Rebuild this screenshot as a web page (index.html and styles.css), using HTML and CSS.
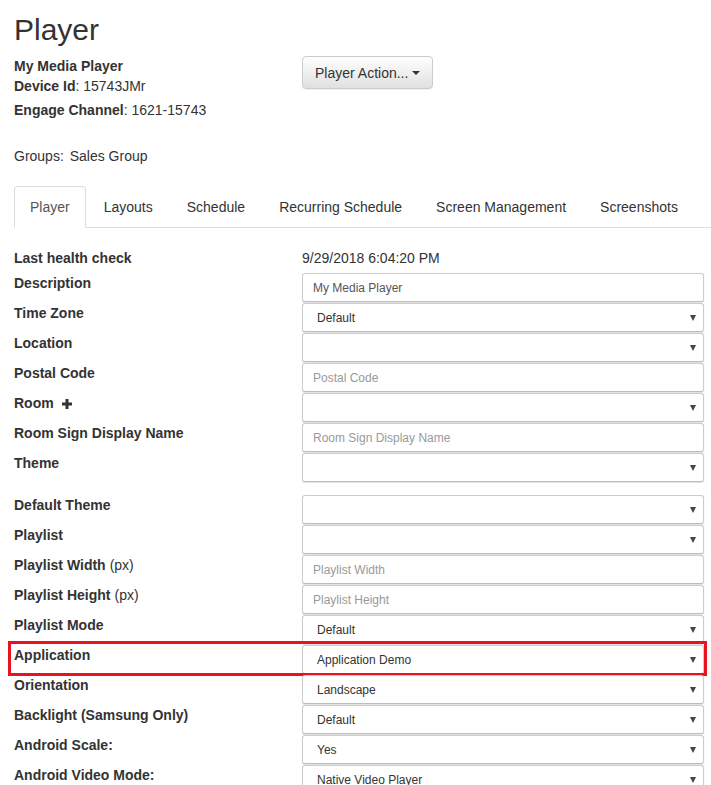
FILE: index.html
```html
<!DOCTYPE html>
<html>
<head>
<meta charset="utf-8">
<title>Player</title>
<link rel="stylesheet" href="styles.css">
</head>
<body>
<div class="page">
  <h1 class="title">Player</h1>
  <div class="header">
    <div class="info">
      <div class="line"><b>My Media Player</b></div>
      <div class="line"><b>Device Id</b>: 15743JMr</div>
      <div class="line gap4"><b>Engage Channel</b>: 1621-15743</div>
      <div class="line groups">Groups: <span class="gname">Sales Group</span></div>
    </div>
    <div class="actions">
      <button class="btn">Player Action... <span class="caret"></span></button>
    </div>
  </div>

  <ul class="tabs">
    <li class="tab active">Player</li>
    <li class="tab">Layouts</li>
    <li class="tab">Schedule</li>
    <li class="tab">Recurring Schedule</li>
    <li class="tab">Screen Management</li>
    <li class="tab">Screenshots</li>
  </ul>

  <div class="content">
    <div class="row health">
      <div class="label">Last health check</div>
      <div class="field text">9/29/2018 6:04:20 PM</div>
    </div>
    <div class="row">
      <div class="label">Description</div>
      <div class="field"><input class="input" type="text" value="My Media Player"></div>
    </div>
    <div class="row">
      <div class="label">Time Zone</div>
      <div class="field"><div class="select"><span>Default</span><i class="arrow"></i></div></div>
    </div>
    <div class="row">
      <div class="label">Location</div>
      <div class="field"><div class="select"><span></span><i class="arrow"></i></div></div>
    </div>
    <div class="row">
      <div class="label">Postal Code</div>
      <div class="field"><input class="input" type="text" placeholder="Postal Code"></div>
    </div>
    <div class="row">
      <div class="label">Room <svg class="plus" width="10" height="10" viewBox="0 0 10 10"><rect x="3.5" y="0" width="3" height="10" fill="#333"/><rect x="0" y="3.5" width="10" height="3" fill="#333"/></svg></div>
      <div class="field"><div class="select"><span></span><i class="arrow"></i></div></div>
    </div>
    <div class="row">
      <div class="label">Room Sign Display Name</div>
      <div class="field"><input class="input" type="text" placeholder="Room Sign Display Name"></div>
    </div>
    <div class="row theme">
      <div class="label">Theme</div>
      <div class="field"><div class="select"><span></span><i class="arrow"></i></div></div>
    </div>
    <div class="row">
      <div class="label">Default Theme</div>
      <div class="field"><div class="select"><span></span><i class="arrow"></i></div></div>
    </div>
    <div class="row">
      <div class="label">Playlist</div>
      <div class="field"><div class="select"><span></span><i class="arrow"></i></div></div>
    </div>
    <div class="row">
      <div class="label">Playlist Width <span class="unit">(px)</span></div>
      <div class="field"><input class="input" type="text" placeholder="Playlist Width"></div>
    </div>
    <div class="row">
      <div class="label">Playlist Height <span class="unit">(px)</span></div>
      <div class="field"><input class="input" type="text" placeholder="Playlist Height"></div>
    </div>
    <div class="row">
      <div class="label">Playlist Mode</div>
      <div class="field"><div class="select"><span>Default</span><i class="arrow"></i></div></div>
    </div>
    <div class="row marked">
      <div class="label">Application</div>
      <div class="field"><div class="select"><span>Application Demo</span><i class="arrow"></i></div></div>
      <div class="highlight"></div>
    </div>
    <div class="row">
      <div class="label">Orientation</div>
      <div class="field"><div class="select"><span>Landscape</span><i class="arrow"></i></div></div>
    </div>
    <div class="row">
      <div class="label">Backlight (Samsung Only)</div>
      <div class="field"><div class="select"><span>Default</span><i class="arrow"></i></div></div>
    </div>
    <div class="row">
      <div class="label">Android Scale:</div>
      <div class="field"><div class="select"><span>Yes</span><i class="arrow"></i></div></div>
    </div>
    <div class="row">
      <div class="label">Android Video Mode:</div>
      <div class="field"><div class="select"><span>Native Video Player</span><i class="arrow"></i></div></div>
    </div>
  </div>
</div>
</body>
</html>
```

FILE: styles.css
```css
* { box-sizing: border-box; }
html, body { margin: 0; padding: 0; background: #fff; }
body {
  font-family: "Liberation Sans", Arial, sans-serif;
  font-size: 14px;
  line-height: 20px;
  color: #333;
  overflow: hidden;
}
.page { padding: 11px 0 0 14px; }
.title {
  margin: 0;
  font-size: 30px;
  line-height: 38px;
  font-weight: normal;
  color: #333;
}
.header { display: flex; margin-top: 7px; }
.info { width: 288px; }
.line { height: 20px; }
.gap4 { margin-top: 4px; }
.groups { margin-top: 26px; }
.gname { margin-left: 2px; }
.btn {
  height: 33px;
  padding: 0 12px;
  font-family: inherit;
  font-size: 14px;
  color: #333;
  background: linear-gradient(#ffffff, #e0e0e0);
  border: 1px solid #ccc;
  border-radius: 4px;
  box-shadow: 0 1px 1px rgba(0,0,0,0.06);
  display: flex;
  align-items: center;
  gap: 4px;
}
.caret {
  display: inline-block;
  width: 0; height: 0;
  border-top: 4px solid #333;
  border-left: 4px solid transparent;
  border-right: 4px solid transparent;
}
.tabs {
  list-style: none;
  margin: 20px 0 0 0;
  padding: 0;
  display: flex;
  border-bottom: 1px solid #ddd;
  height: 42px;
}
.tab {
  padding: 10px 15px;
  border: 1px solid transparent;
  border-radius: 4px 4px 0 0;
  margin-right: 2px;
  margin-bottom: -1px;
  line-height: 20px;
  color: #333;
}
.tab.active {
  border-color: #ddd;
  border-bottom-color: #fff;
  background: #fff;
  color: #555;
}
.content { padding-top: 20px; }
.row {
  display: flex;
  width: 690px;
  height: 29px;
  margin-bottom: 1px;
  position: relative;
}
.row.health { height: 24px; }
.row.theme { margin-bottom: 13px; }
.label {
  width: 288px;
  font-weight: bold;
  line-height: 20px;
  display: flex;
  align-items: flex-start;
  gap: 8px;
}
.label .unit { font-weight: normal; margin-left: -4px; }
.plus { margin-top: 6px; }
.field { width: 402px; }
.field.text { line-height: 20px; }
.input, .select {
  width: 100%;
  height: 29px;
  border: 1px solid #ccc;
  border-bottom-color: #bdbdbd;
  border-radius: 3px;
  box-shadow: 0 1px 1px rgba(0,0,0,0.12);
  background: #fff;
  font-family: "Liberation Sans", Arial, sans-serif;
  font-size: 12px;
}
.input {
  padding: 0 10px;
  color: #555;
  outline: none;
}
.input::placeholder { color: #999; }
.select {
  display: flex;
  align-items: center;
  justify-content: space-between;
  padding: 0 7px 0 14px;
  color: #333;
}
.arrow {
  width: 0; height: 0;
  border-top: 6px solid #444;
  border-left: 3px solid transparent;
  border-right: 3px solid transparent;
}
.highlight {
  position: absolute;
  left: -6px;
  right: -3px;
  top: -4px;
  bottom: -2px;
  border: 3px solid #e8131f;
  pointer-events: none;
}
```
